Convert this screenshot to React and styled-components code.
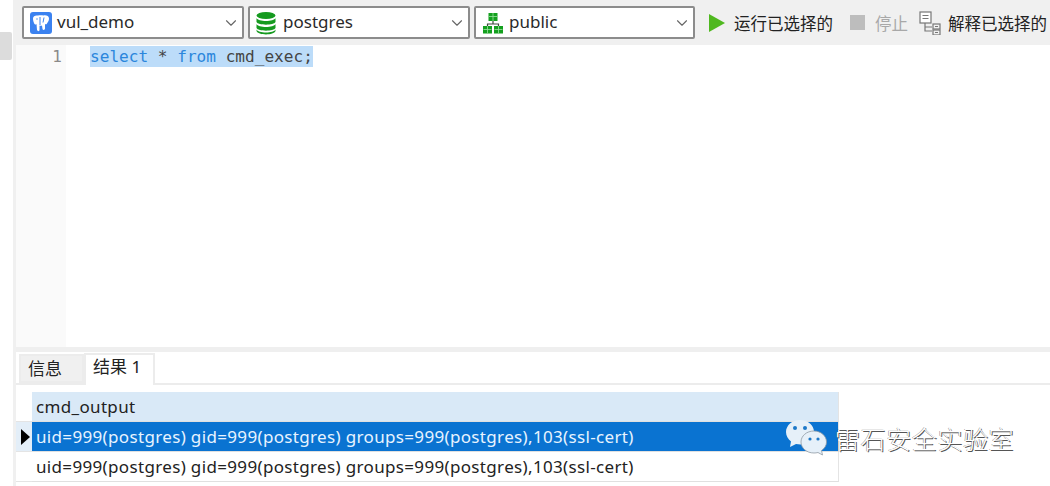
import React from "react";
import styled, { createGlobalStyle } from "styled-components";
import { ChevronDown } from "lucide-react";

const GlobalStyle = createGlobalStyle`
    html, body {
        margin: 0;
        padding: 0;
        background: #fff;
    }
    body {
        font-family: "Noto Sans", "Noto Sans CJK SC", sans-serif;
        color: #222;
    }
`;

const Page = styled.div`
    position: relative;
    width: 1050px;
    height: 486px;
    display: flex;
    overflow: hidden;
    background: #fff;
`;

const Rail = styled.div`
    flex: 0 0 13px;
    padding-top: 32px;
    box-sizing: border-box;
`;

const RailThumb = styled.div`
    width: 12px;
    height: 28px;
    background: #dcdcdc;
    border-radius: 0 2px 2px 0;
`;

const Main = styled.div`
    flex: 1;
    min-width: 0;
    display: flex;
    flex-direction: column;
    border-left: 3px solid #f0f0f0;
`;

const Toolbar = styled.div`
    flex: 0 0 45px;
    box-sizing: border-box;
    display: flex;
    align-items: flex-start;
    padding: 6px 0 0 6px;
    gap: 4px;
    background: #f0f0f0;
    white-space: nowrap;
`;

const Combo = styled.div`
    flex: 0 0 ${props => props.$width}px;
    box-sizing: border-box;
    height: 33px;
    display: flex;
    align-items: center;
    padding: 0 2px 0 6px;
    gap: 5px;
    background: #fff;
    border: 2px solid #8c8c8c;
    border-radius: 2px;
    font-size: 17px;
    color: #2a2a2a;
`;

const ComboLabel = styled.span`
    flex: 1;
    margin-top: -3px;
`;

const Actions = styled.div`
    display: flex;
    align-items: center;
    height: 33px;
    margin-left: 10px;
    font-size: 16.5px;
`;

const Action = styled.div`
    display: flex;
    align-items: center;
    gap: ${props => props.$gap}px;
    margin-right: ${props => props.$after || 0}px;
    color: ${props => (props.$disabled ? "#a8a8a8" : "#222")};
`;

const StopSquare = styled.span`
    width: 15px;
    height: 15px;
    background: #bdbdbd;
`;

const Editor = styled.div`
    flex: 1;
    min-height: 0;
    display: flex;
    background: #fff;
`;

const LineGutter = styled.div`
    flex: 0 0 50px;
    box-sizing: border-box;
    padding: 3px 4px 0 0;
    background: #fafafa;
    text-align: right;
    color: #8a8a8a;
    font: 16px/18px "DejaVu Sans Mono", monospace;
`;

const Code = styled.div`
    padding: 1px 0 0 24px;
    font: 16.1px/21px "DejaVu Sans Mono", monospace;
    white-space: pre;
`;

const Selected = styled.span`
    display: inline-block;
    background: #bcdcf9;
    color: #444;
`;

const Keyword = styled.span`
    color: #2b86dc;
`;

const Splitter = styled.div`
    flex: 0 0 5px;
    background: #efefef;
`;

const Results = styled.div`
    flex: 0 0 134px;
    display: flex;
    flex-direction: column;
`;

const Tabs = styled.div`
    flex: 0 0 33px;
    box-sizing: border-box;
    display: flex;
    align-items: flex-end;
    padding-left: 3px;
    border-bottom: 2px solid #ececec;
    margin-bottom: 7px;
    background: #fff;
`;

const Tab = styled.div`
    box-sizing: border-box;
    width: ${props => props.$width}px;
    height: ${props => (props.$active ? 32 : 29)}px;
    margin-bottom: ${props => (props.$active ? -2 : 0)}px;
    padding: ${props => (props.$active ? "0 0 9px 7px" : "0 0 3px 7px")};
    display: flex;
    align-items: center;
    font-size: 17px;
    background: ${props => (props.$active ? "#fff" : "#f0f0f0")};
    border: 2px solid #ececec;
    border-bottom: ${props => (props.$active ? "none" : "2px solid #ececec")};
`;

const Grid = styled.div`
    width: 823px;
    display: grid;
    grid-template-columns: 16px 1fr;
    grid-auto-rows: 30px;
    font-size: 17px;
    letter-spacing: 0.34px;
`;

const Marker = styled.div`
    display: flex;
    align-items: center;
    justify-content: center;
    background: ${props => (props.$current ? "#e3eef8" : "#fff")};
    border-bottom: 1px solid #e4e4e4;
    box-sizing: border-box;
`;

const Triangle = styled.span`
    width: 0;
    height: 0;
    margin-left: 3px;
    border-left: 9px solid #000;
    border-top: 8px solid transparent;
    border-bottom: 8px solid transparent;
`;

const Cell = styled.div`
    box-sizing: border-box;
    display: flex;
    align-items: center;
    padding-left: 4px;
    white-space: nowrap;
    border-right: 1px solid #e4e4e4;
    border-bottom: 1px solid #e0e0e0;
    background: ${props =>
        props.$header ? "#d9e9f7" : props.$selected ? "#0a73d1" : "#fff"};
    color: ${props => (props.$selected ? "#e8f3ff" : "#222")};
`;

const Watermark = styled.div`
    position: absolute;
    left: 785px;
    top: 419px;
    display: flex;
    align-items: center;
    gap: 6px;
`;

const WatermarkText = styled.span`
    margin-top: -1px;
    font-size: 25px;
    letter-spacing: 0.6px;
    font-weight: 300;
    color: #fff;
    text-shadow: 1px 1px 0 #555, -0.5px 0 0 #888;
`;

const PgIcon = () => (
    <svg width="22" height="22" viewBox="0 0 22 22">
        <rect width="22" height="22" rx="3" fill="#3b82f0" />
        <path
            d="M3 6.500c0-2.500 2.500-3.500 5-3 1.500-.5 4-.5 5.500 0 2.500-.6 5.500.5 5.500 3 0 2-1 3.500-2 5-.5 1-1.500 1-2 .5v4.500c0 1.500-2 2-2.500.5l-.5-3.500c-1 .5-2 .3-2.500 0v4.500c0 1.500-2 1.500-2.500 0l-.5-6c-1 1-2 .5-2.500-1C3.500 9.500 3 8.500 3 6.500z"
            fill="#fff"
        />
        <path d="M10 5v8M14 5.500l-1 5" stroke="#3b82f0" strokeWidth="1" fill="none" />
        <circle cx="7" cy="7" r="1" fill="#9cc3f7" />
    </svg>
);

const DbIcon = () => (
    <svg width="22" height="24" viewBox="0 0 22 24">
        <ellipse cx="10" cy="4.500" rx="9.500" ry="3.500" fill="#159a1f" />
        <path d="M.5 7c1.500 4 17.500 4 19 0v4c-1.500 3.500-17.500 3.500-19 0z" fill="#159a1f" />
        <path d="M.5 13c1.500 4 17.500 4 19 0v4c-1.500 3.500-17.500 3.500-19 0z" fill="#159a1f" />
        <path d="M.5 18.500c1.500 4 17.500 4 19 0v1.500c-1.500 4.500-17.500 4.500-19 0z" fill="#159a1f" />
    </svg>
);

const SchemaIcon = () => (
    <svg width="22" height="22" viewBox="0 0 22 22">
        <rect x="6.500" y="1" width="9" height="8" fill="#14a01f" />
        <rect x="1" y="14" width="9" height="7.500" fill="#14a01f" />
        <rect x="12" y="14" width="9" height="7.500" fill="#14a01f" />
        <path d="M11 9v3M5.500 14v-2h11v2" stroke="#3d4a3d" strokeWidth="1.200" fill="none" />
        <path
            d="M7 4.500h8M11 1v8M1.500 17.500h8M5.500 14v7M12.500 17.500h8M16.500 14v7"
            stroke="#9be39f"
            strokeWidth="0.800"
        />
    </svg>
);

const PlayIcon = () => (
    <svg width="16" height="18" viewBox="0 0 16 18">
        <path d="M0 0l16 9L0 18z" fill="#4fb81f" />
    </svg>
);

const ExplainIcon = () => (
    <svg width="24" height="24" viewBox="0 0 24 24" fill="none" stroke="#777" strokeWidth="1.200">
        <rect x="1" y="1" width="11" height="11" fill="#fff" />
        <path d="M3.500 4.500h6M3.500 7.500h6" />
        <path d="M6 12v8h7M6 16h7" />
        <rect x="14" y="13" width="7" height="5" />
        <rect x="14" y="19" width="7" height="5" />
        <path d="M16 15.500h3M16 21.500h3" />
    </svg>
);

const WeChatIcon = () => (
    <svg width="44" height="38" viewBox="0 0 44 38">
        <path
            d="M15 1C7 1 1 6.500 1 13c0 4 2 7 5 9.500L5 28l6-3c1.500.3 3 .5 4.500.5C23 25.500 29 20 29 13S23 1 15 1z"
            fill="#e6f0f9"
        />
        <circle cx="10" cy="9" r="2" fill="#1d78c8" />
        <circle cx="20" cy="9" r="2" fill="#1d78c8" />
        <path
            d="M29 12c-7.500 0-13 5-13 11s5.500 11 13 11c1.500 0 2.500-.2 4-.5l4.500 2.500-1-4.500c3-2 5-5 5-8.500 0-6-5.500-11-12.500-11z"
            fill="#e6f0f9"
            stroke="#8f9aa5"
            strokeWidth="0.800"
        />
        <circle cx="25" cy="20" r="1.600" fill="#1d78c8" />
        <circle cx="33" cy="20" r="1.600" fill="#1d78c8" />
    </svg>
);

const COMBOS = [
    { label: "vul_demo", width: 222, icon: <PgIcon /> },
    { label: "postgres", width: 222, icon: <DbIcon /> },
    { label: "public", width: 221, icon: <SchemaIcon /> }
];

const ROW_TEXT = "uid=999(postgres) gid=999(postgres) groups=999(postgres),103(ssl-cert)";

const App = () => {
    return (
        <Page>
            <GlobalStyle />
            <Rail>
                <RailThumb />
            </Rail>
            <Main>
                <Toolbar>
                    {COMBOS.map(combo => (
                        <Combo key={combo.label} $width={combo.width}>
                            {combo.icon}
                            <ComboLabel>{combo.label}</ComboLabel>
                            <ChevronDown size={18} color="#666" strokeWidth={1.5} />
                        </Combo>
                    ))}
                    <Actions>
                        <Action $gap={9} $after={17}>
                            <PlayIcon />
                            运行已选择的
                        </Action>
                        <Action $disabled $after={11} $gap={10}>
                            <StopSquare />
                            停止
                        </Action>
                        <Action $gap={5}>
                            <ExplainIcon />
                            解释已选择的
                        </Action>
                    </Actions>
                </Toolbar>
                <Editor>
                    <LineGutter>1</LineGutter>
                    <Code>
                        <Selected>
                            <Keyword>select</Keyword> * <Keyword>from</Keyword> cmd_exec;
                        </Selected>
                    </Code>
                </Editor>
                <Splitter />
                <Results>
                    <Tabs>
                        <Tab $width={65}>信息</Tab>
                        <Tab $width={71} $active>
                            结果 1
                        </Tab>
                    </Tabs>
                    <Grid>
                        <Marker />
                        <Cell $header>cmd_output</Cell>
                        <Marker $current>
                            <Triangle />
                        </Marker>
                        <Cell $selected>{ROW_TEXT}</Cell>
                        <Marker />
                        <Cell>{ROW_TEXT}</Cell>
                    </Grid>
                </Results>
            </Main>
            <Watermark>
                <WeChatIcon />
                <WatermarkText>雷石安全实验室</WatermarkText>
            </Watermark>
        </Page>
    );
};

export default React.memo(App);
